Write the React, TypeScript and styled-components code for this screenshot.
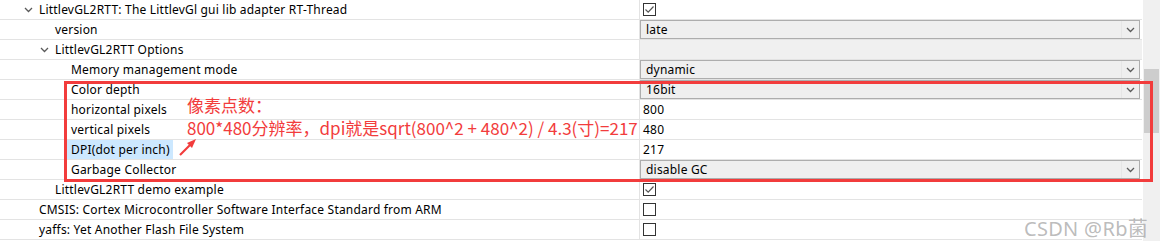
import React from "react";
import styled, { createGlobalStyle } from "styled-components";

type TValue =
  | { kind: "check"; checked: boolean }
  | { kind: "select"; text: string }
  | { kind: "text"; text: string }
  | { kind: "group" };

interface IRow {
  level: number;
  label: string;
  expand?: boolean;
  selected?: boolean;
  value: TValue;
}

const rows: IRow[] = [
  { level: 1, expand: true, label: "LittlevGL2RTT: The LittlevGl gui lib adapter RT-Thread", value: { kind: "check", checked: true } },
  { level: 2, label: "version", value: { kind: "select", text: "late" } },
  { level: 2, expand: true, label: "LittlevGL2RTT Options", value: { kind: "group" } },
  { level: 3, label: "Memory management mode", value: { kind: "select", text: "dynamic" } },
  { level: 3, label: "Color depth", value: { kind: "select", text: "16bit" } },
  { level: 3, label: "horizontal pixels", value: { kind: "text", text: "800" } },
  { level: 3, label: "vertical pixels", value: { kind: "text", text: "480" } },
  { level: 3, label: "DPI(dot per inch)", selected: true, value: { kind: "text", text: "217" } },
  { level: 3, label: "Garbage Collector", value: { kind: "select", text: "disable GC" } },
  { level: 2, label: "LittlevGL2RTT demo example", value: { kind: "check", checked: true } },
  { level: 1, label: "CMSIS: Cortex Microcontroller Software Interface Standard from ARM", value: { kind: "check", checked: false } },
  { level: 1, label: "yaffs: Yet Another Flash File System", value: { kind: "check", checked: false } },
];

const GlobalStyle = createGlobalStyle`
  html, body {
    margin: 0;
    padding: 0;
    background: #ffffff;
  }
  body {
    font-family: "Noto Sans", "Noto Sans CJK SC", sans-serif;
    font-size: 12px;
    letter-spacing: 0.2px;
    color: #000000;
  }
`;

const Chevron = () => (
  <svg width="9" height="6" viewBox="0 0 9 6">
    <polyline points="1,1 4.5,4.5 8,1" fill="none" stroke="#5a5a5a" strokeWidth="1.3" />
  </svg>
);

const CheckBox = ({ checked }: { checked: boolean }): JSX.Element => (
  <StyledCheck>
    {checked ? (
      <svg width="11" height="11" viewBox="0 0 11 11">
        <polyline points="1.5,5.5 4.2,8.2 9.5,2.5" fill="none" stroke="#555" strokeWidth="1.2" />
      </svg>
    ) : null}
  </StyledCheck>
);

const Select = ({ text }: { text: string }): JSX.Element => (
  <StyledSelect>
    <span className="text">{text}</span>
    <span className="arrow">
      <Chevron />
    </span>
  </StyledSelect>
);

const ValueCell = ({ value }: { value: TValue }): JSX.Element => {
  switch (value.kind) {
    case "check":
      return (
        <StyledValue>
          <CheckBox checked={value.checked} />
        </StyledValue>
      );
    case "select":
      return (
        <StyledValue>
          <Select text={value.text} />
        </StyledValue>
      );
    case "text":
      return <StyledValue className="plain">{value.text}</StyledValue>;
    default:
      return <StyledValue className="group" />;
  }
};

const App = (): JSX.Element => {
  return (
    <>
      <GlobalStyle />
      <StyledPage>
        <StyledTree>
          {rows.map((row, i) => (
            <StyledRow key={i}>
              <StyledLabel level={row.level}>
                <span className="toggle">{row.expand ? <Chevron /> : null}</span>
                <StyledName selected={!!row.selected}>{row.label}</StyledName>
              </StyledLabel>
              <ValueCell value={row.value} />
            </StyledRow>
          ))}
        </StyledTree>
        <StyledScrollbar>
          <div className="thumb" />
        </StyledScrollbar>

        <StyledMarkBox />
        <StyledNote>
          <div>像素点数：</div>
          <div>800*480分辨率，dpi就是sqrt(800^2 + 480^2) / 4.3(寸)=217</div>
        </StyledNote>
        <StyledArrow width="24" height="24" viewBox="0 0 24 24">
          <line x1="2" y1="21" x2="13" y2="10" stroke="#f23c3c" strokeWidth="2.2" />
          <polygon points="18,5 9,9 14,14" fill="#f23c3c" />
        </StyledArrow>
        <StyledWatermark>CSDN @Rb菌</StyledWatermark>
      </StyledPage>
    </>
  );
};

const StyledPage = styled.div`
  position: relative;
  display: flex;
  width: 1161px;
  height: 241px;
  overflow: hidden;
  background: #ffffff;
`;

const StyledTree = styled.div`
  display: flex;
  flex-direction: column;
  width: 1142px;
  margin-right: 1px;
`;

const StyledRow = styled.div`
  display: grid;
  grid-template-columns: 640px 1fr;
  height: 19px;
  border-bottom: 1px solid #e3e3e3;
`;

const StyledLabel = styled.div<{ level: number }>`
  display: flex;
  align-items: center;
  padding-left: ${({ level }) => 23 + (level - 1) * 16}px;
  border-right: 1px solid #e3e3e3;
  white-space: nowrap;
  overflow: hidden;

  & > .toggle {
    display: flex;
    align-items: center;
    width: 16px;
    flex: none;
    padding-left: 1px;
    box-sizing: border-box;
  }
`;

const StyledName = styled.span<{ selected: boolean }>`
  display: flex;
  align-items: center;
  height: 19px;
  margin-left: ${({ selected }) => (selected ? "-4px" : "0")};
  padding: ${({ selected }) => (selected ? "0 3px 0 4px" : "0")};
  background: ${({ selected }) => (selected ? "#cce8ff" : "transparent")};
  line-height: 19px;
`;

const StyledValue = styled.div`
  display: flex;
  align-items: center;
  padding-left: 2px;
  line-height: 19px;

  &.plain {
    padding-left: 3px;
  }
  &.group {
    background: #f0f0f0;
  }
`;

const StyledCheck = styled.span`
  display: flex;
  align-items: center;
  justify-content: center;
  box-sizing: border-box;
  width: 13px;
  height: 13px;
  margin-left: 1px;
  border: 1px solid #333333;
  background: #ffffff;
`;

const StyledSelect = styled.div`
  display: flex;
  align-items: center;
  box-sizing: border-box;
  width: 100%;
  height: 19px;
  margin-left: -2px;
  border: 1px solid #adadad;
  background: #efefef;

  & > .text {
    flex: 1;
    padding-left: 5px;
  }
  & > .arrow {
    display: flex;
    align-items: center;
    justify-content: center;
    width: 17px;
    height: 100%;
    border-left: 1px solid #e6e6e6;
  }
`;

const StyledScrollbar = styled.div`
  position: relative;
  width: 17px;
  height: 100%;
  background: #f0f0f0;
  border-right: 1px solid #ffffff;

  & > .thumb {
    position: absolute;
    left: 1px;
    right: 1px;
    top: 69px;
    height: 64px;
    background: #cdcdcd;
  }
`;

const StyledMarkBox = styled.div`
  position: absolute;
  left: 64px;
  top: 81px;
  width: 1089px;
  height: 101px;
  box-sizing: border-box;
  border: 3px solid #f23c3c;
  pointer-events: none;
`;

const StyledNote = styled.div`
  position: absolute;
  left: 187px;
  top: 93px;
  color: #f23c3c;
  font-family: "Noto Sans CJK SC", sans-serif;
  font-size: 17px;
  line-height: 23px;
  letter-spacing: 0;
  white-space: nowrap;
`;

const StyledArrow = styled.svg`
  position: absolute;
  left: 178px;
  top: 134px;
`;

const StyledWatermark = styled.div`
  position: absolute;
  left: 1024px;
  top: 213px;
  color: rgba(150, 150, 150, 0.65);
  font-family: "Noto Sans", "Noto Sans CJK SC", sans-serif;
  font-size: 20px;
  letter-spacing: 0.3px;
  white-space: nowrap;
`;

export default App;
